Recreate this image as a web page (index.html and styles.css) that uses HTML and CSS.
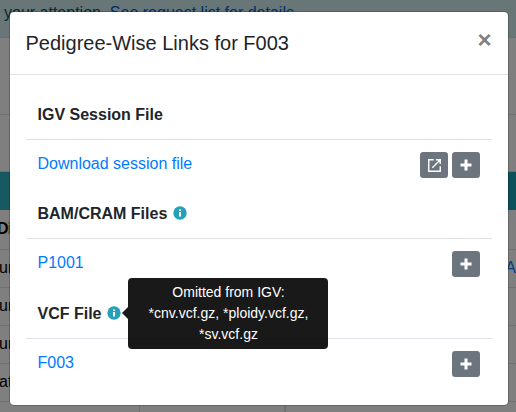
FILE: index.html
```html
<!DOCTYPE html>
<html lang="en">
<head>
<meta charset="utf-8">
<title>Pedigree-Wise Links</title>
<link rel="stylesheet" href="styles.css">
</head>
<body>
<svg class="defs" aria-hidden="true">
  <symbol id="plus" viewBox="0 0 12 12"><path d="M6 .5v11M.5 6h11" stroke="#fff" stroke-width="3"/></symbol>
  <symbol id="info" viewBox="0 0 14 14"><circle cx="7" cy="7" r="6.7" fill="#26a2b8"/><path d="M6 3.4h2v1.7H6zM6 6h2v4.5H6z" fill="#fff"/></symbol>
</svg>
<div class="page">
  <div class="alert">your attention. <a>See request list for details</a>.</div>
  <div class="toolbar"></div>
  <div class="filters"></div>
  <div class="banner"></div>
  <div class="row head"><b>D<span class="sort">i</span></b></div>
  <div class="row"><span>ur</span><a>A</a></div>
  <div class="row"><span>ur</span></div>
  <div class="row"><span>ur</span></div>
  <div class="row"><span>at</span></div>
  <div class="row columns"><i></i><i></i><i></i></div>
</div>
<div class="backdrop"></div>
<div class="modal">
  <header class="modal-header"><h5>Pedigree-Wise Links for F003</h5><span class="close">×</span></header>
  <div class="modal-body">
    <section>
      <h6>IGV Session File</h6>
      <div class="link-row"><a>Download session file</a>
        <div class="actions">
          <span class="btn"><svg width="13" height="13" viewBox="0 0 12 12" fill="none" stroke="#fff" stroke-width="1.3"><path d="M5.3.7H.7v10.6h10.6V6.7M7.3.7h4v4M11.1.9 4 8"/></svg></span>
          <span class="btn"><svg width="12" height="12"><use href="#plus"/></svg></span>
        </div>
      </div>
    </section>
    <section>
      <h6>BAM/CRAM Files <svg class="info" width="14" height="14"><use href="#info"/></svg></h6>
      <div class="link-row"><a>P1001</a><span class="btn"><svg width="12" height="12"><use href="#plus"/></svg></span></div>
    </section>
    <section>
      <h6>VCF File <svg class="info" width="14" height="14"><use href="#info"/></svg></h6>
      <div class="link-row"><a>F003</a><span class="btn"><svg width="12" height="12"><use href="#plus"/></svg></span></div>
    </section>
  </div>
</div>
<div class="tooltip">Omitted from IGV: *cnv.vcf.gz, *ploidy.vcf.gz, *sv.vcf.gz</div>
</body>
</html>
```
FILE: styles.css
```css
* { box-sizing: border-box; }
body {
  margin: 0;
  height: 412px;
  overflow: hidden;
  font: 16px/24px "Liberation Sans", Arial, sans-serif;
  color: #212529;
}
a { color: #007bff; }
.defs { position: absolute; width: 0; height: 0; }
.page { height: 412px; overflow: hidden; background: #fff; }
.alert {
  height: 38px;
  padding: 1px 0 0 4px;
  background: #d3ecef;
  border-bottom: 1px solid #bee5eb;
  color: #0c5460;
}
.alert a { color: #0062cc; }
.toolbar { height: 77px; border-bottom: 1px solid #dee2e6; }
.filters { height: 57px; border-bottom: 1px solid #dee2e6; }
.banner { height: 38px; background: linear-gradient(90deg, #30b0c4 10px, #17a2b8 10px); }
.row {
  display: flex;
  justify-content: space-between;
  height: 38px;
  padding-top: 6px;
  border-bottom: 1px solid #dee2e6;
  color: #000;
}
.row span { margin-left: -1px; }
.head { height: 40px; padding-top: 7px; }
.head b { margin-left: -3px; }
.sort { color: #e8954a; }
.columns { justify-content: flex-start; padding: 0; }
.columns i { border-right: 1px solid #dee2e6; }
.columns i:first-child { width: 140px; }
.columns i:nth-child(2) { width: 145px; }
.backdrop { position: absolute; inset: 0; background: rgba(0, 0, 0, .5); }
.modal {
  position: absolute;
  left: 9px;
  top: 11px;
  width: 500px;
  height: 395px;
  background: #fff;
  background-clip: padding-box;
  border: 1px solid rgba(0, 0, 0, .2);
  border-radius: 5px;
}
.modal-header {
  display: flex;
  justify-content: space-between;
  height: 63px;
  padding: 16px 16px 16px 15.5px;
  border-bottom: 1px solid #dee2e6;
}
h5 { margin: 0; font-size: 20px; font-weight: 400; line-height: 30px; }
.close { font-size: 24px; font-weight: 700; line-height: 24px; color: #7f7f7f; padding-right: .5px; }
.modal-body { padding: 15px 16px; }
section { height: 99.45px; }
h6 {
  display: flex;
  align-items: center;
  height: 49px;
  margin: 0;
  padding-left: 11.5px;
  font-size: 16px;
  font-weight: 700;
}
section:last-child h6 { padding-top: 1.2px; }
.info { margin: -1.5px 0 0 5.5px; }
.link-row {
  display: flex;
  justify-content: space-between;
  align-items: flex-start;
  height: 50.45px;
  padding: 12px 12px 0 11.5px;
  border-top: 1px solid #dee2e6;
}
.link-row a { margin-top: -.4px; }
section:last-child a { margin-top: .4px; }
.actions { display: flex; gap: 4px; }
.btn {
  display: flex;
  align-items: center;
  justify-content: center;
  width: 28px;
  height: 26px;
  border-radius: 3.2px;
  background: #6c757d;
}
.tooltip {
  position: absolute;
  left: 128px;
  top: 278px;
  width: 200px;
  height: 71px;
  padding: 4px 7.5px 4px 8.5px;
  border-radius: 4px;
  background: rgba(0, 0, 0, .9);
  color: #fff;
  font-size: 14px;
  line-height: 21px;
  text-align: center;
}
.tooltip::before {
  content: "";
  position: absolute;
  left: -6px;
  top: 29px;
  border: solid transparent;
  border-width: 6px 6px 6px 0;
  border-right-color: rgba(0, 0, 0, .9);
}
```
